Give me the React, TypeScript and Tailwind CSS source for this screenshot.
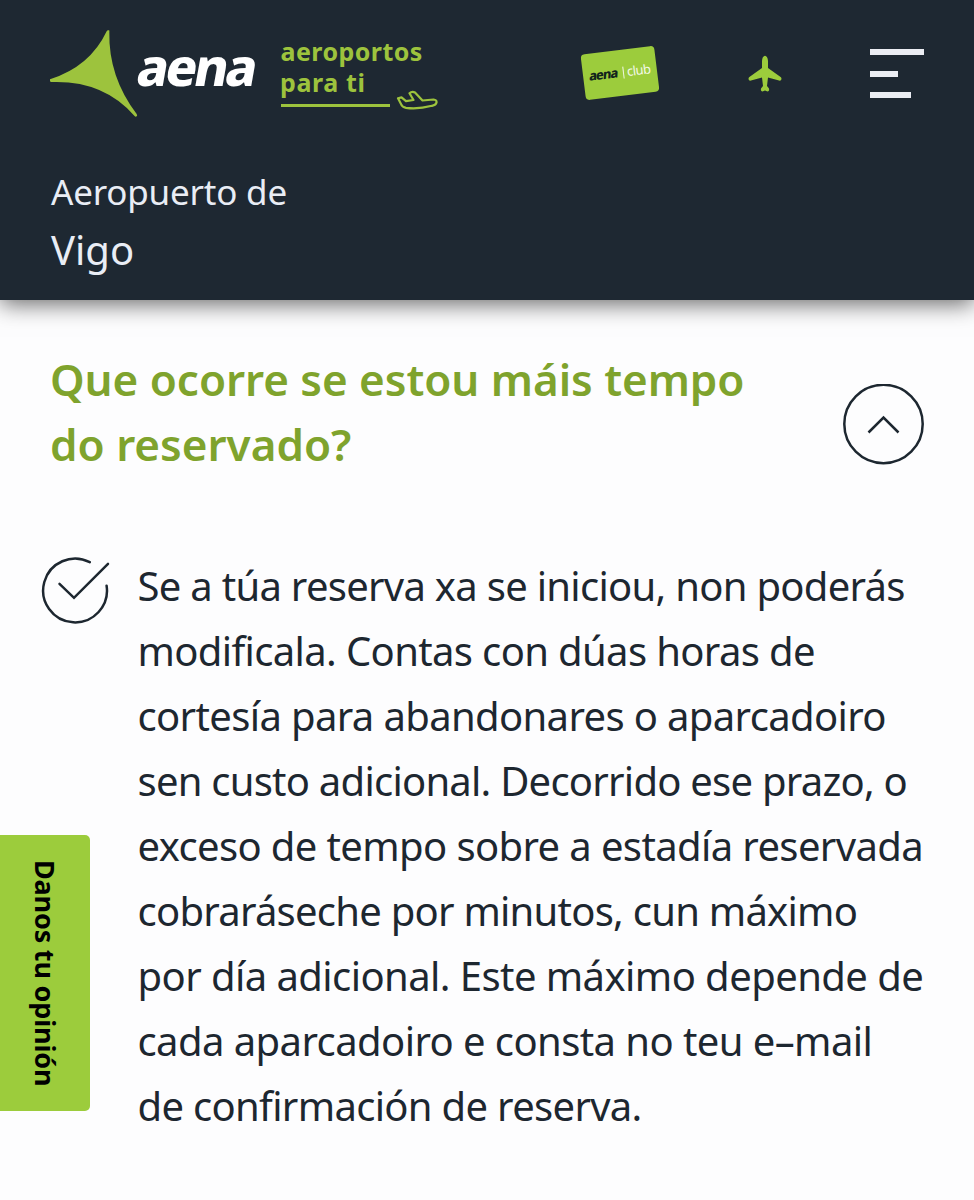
const answer = [
  { text: "Se a túa reserva xa se iniciou, non poderás", tracking: "tracking-[-0.71px]" },
  { text: "modificala. Contas con dúas horas de", tracking: "tracking-[-0.64px]" },
  { text: "cortesía para abandonares o aparcadoiro", tracking: "tracking-[-0.64px]" },
  { text: "sen custo adicional. Decorrido ese prazo, o", tracking: "tracking-[-0.76px]" },
  { text: "exceso de tempo sobre a estadía reservada", tracking: "tracking-[-0.62px]" },
  { text: "cobraráseche por minutos, cun máximo", tracking: "tracking-[-0.75px]" },
  { text: "por día adicional. Este máximo depende de", tracking: "tracking-[-0.57px]" },
  { text: "cada aparcadoiro e consta no teu e–mail", tracking: "tracking-[-0.58px]" },
  { text: "de confirmación de reserva.", tracking: "tracking-[-0.68px]" },
];

function Logo() {
  return (
    <div className="flex w-[531px] shrink-0 items-start">
      <svg className="size-[90px] shrink-0" viewBox="0 0 270 270" fill="#9dc33d">
        <path d="M3 151Q123 113 173 7Q175 2 180 4Q182 4 181 9Q178 143 263 255Q266 260 263 262Q260 265 256 260Q163 153 7 159Q3 159 3 155Z" />
      </svg>
      <div className="mt-[7px] -ml-[1px] w-[142px] shrink-0 text-[52px] leading-[60px] font-extrabold tracking-[-3px] text-white">
        <span className="inline-block -skew-x-10">aena</span>
      </div>
      <div className="mt-[7px] text-[25px] leading-[30.5px] font-bold tracking-[0.45px] text-[#9dc33d]">
        <p className="pl-[0.5px]">aeroportos</p>
        <div className="flex items-start">
          <div className="ml-[1px] w-[109px] border-b-[3px] border-[#9dc33d] pb-[6.5px]">
            <p className="-ml-[1px] tracking-[0.6px]">para ti</p>
          </div>
          <svg className="mt-[23px] ml-[6px] h-[22px] w-[44px]" viewBox="0 0 44 22" fill="none" stroke="#9dc33d" strokeWidth="2.2" strokeLinejoin="round" strokeLinecap="round">
            <path d="M2 8.200L5.500 7.400L10 11.200L17.500 10L13.500 3.200Q16 .8 19 2.500L26.500 10.500L37.500 9.500Q41 10 40.500 12.500Q40 15 36 15.800Q22 19.400 10 17.800Q6 17 5 14Z" />
          </svg>
        </div>
      </div>
    </div>
  );
}

function ClubCard() {
  return (
    <div className="mt-[20.5px] ml-[2.500px] flex h-[46px] w-[74px] shrink-0 -rotate-7 items-center justify-center rounded-[4px] bg-[#9ccc3c] pb-[1px] text-[13px] leading-none">
      <span className="-skew-x-10 font-extrabold tracking-[-1px] text-[#12241c]">aena</span>
      <span className="mr-[3px] ml-[5px] h-[12px] w-[1.300px] bg-[#f0f7df]" />
      <span className="text-[13px] tracking-[-0.5px] text-[#f4f9e8]">club</span>
    </div>
  );
}

export default function App() {
  return (
    <div className="relative min-h-[1200px] w-[974px] overflow-hidden bg-[#fdfdfe] font-['Noto_Sans',sans-serif] text-[#1d2730]">
      <header className="relative h-[299.5px] bg-[#1e2832] pt-[29px] shadow-[0_4px_22px_rgba(0,0,0,0.6)]">
        <div className="flex h-[134px] items-start pr-[50px] pl-[49px]">
          <Logo />
          <ClubCard />
          <svg className="mt-[26px] ml-[91px] h-[38px] w-[34px] shrink-0" viewBox="0 0 34 38" fill="#9ccc3c">
            <path d="M17 .8C18.600.8 19.800 3 20 6V13L32.600 22Q34 23.300 33.200 24.700Q32.500 26 31 25.500L20 22.500L19 31L21 33.500Q21.600 36.500 19.500 36.500L17 35.500L14.500 36.500Q12.400 36.500 13 33.500L15 31L14 22.500L3 25.500Q1.500 26 .8 24.700Q0 23.300 1.400 22L14 13V6C14.200 3 15.400.8 17 .8Z" />
          </svg>
          <button className="mt-[20px] ml-auto flex w-[54px] flex-col items-start gap-[15.500px]" aria-label="Menú">
            <span className="h-[6px] w-[54px] bg-[#ebedf3]" />
            <span className="h-[6px] w-[28px] bg-[#ebedf3]" />
            <span className="h-[6px] w-[41px] bg-[#ebedf3]" />
          </button>
        </div>
        <div className="pl-[51px] leading-[58px] text-[#e9edf5]">
          <p className="text-[35px] tracking-[-0.2px]">Aeropuerto de</p>
          <p className="text-[40px]">Vigo</p>
        </div>
      </header>

      <main className="pt-[47px]">
        <div className="flex items-start justify-between pr-[50px] pl-[50px]">
          <h2 className="text-[44px] leading-[65px] font-semibold whitespace-nowrap text-[#7fa32d]">
            <span className="block tracking-[-0.04px]">Que ocorre se estou máis tempo</span>
            <span className="block">do reservado?</span>
          </h2>
          <button className="mt-[37px] size-[81px]" aria-label="Pechar">
            <svg viewBox="0 0 81 81" fill="none" stroke="#1d2730" strokeWidth="2.5">
              <circle cx="40.500" cy="40" r="39.200" />
              <path d="M25.500 48.500L40.500 33.500L55.500 48.500" />
            </svg>
          </button>
        </div>
        <div className="mt-[76px] flex items-start pl-[41px]">
          <svg className="mt-[3.500px] h-[70px] w-[70px] shrink-0" viewBox="0 0 70 70" fill="none" stroke="#1d2730" strokeWidth="2.5" strokeLinecap="round">
            <path d="M48.800 6.200A31.900 31.900 0 1 0 65.600 29.700" />
            <path d="M18.500 27.800L33 41.800L67 7.800" />
          </svg>
          <div className="ml-[26.500px] text-[40px] leading-[65px] whitespace-nowrap">
            {answer.map((line) => (
              <p key={line.text} className={line.tracking}>{line.text}</p>
            ))}
          </div>
        </div>
      </main>

      <button className="absolute top-[835px] left-0 flex h-[276px] w-[90px] items-center justify-center rounded-r-[5px] bg-[#9ccc3c]">
        <span className="text-[27px] leading-[40px] font-bold tracking-[-0.18px] whitespace-nowrap text-black [writing-mode:vertical-rl]">
          Danos tu opinión
        </span>
      </button>
    </div>
  );
}
